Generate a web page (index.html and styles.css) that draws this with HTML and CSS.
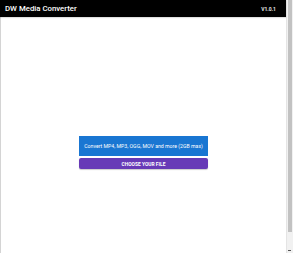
FILE: index.html
```html
<!DOCTYPE html>
<html>
<head>
<meta charset="utf-8">
<link rel="stylesheet" href="styles.css">
</head>
<body>
<div class="frame">
  <div class="page">
    <header class="topbar">
      <span class="title">DW Media Converter</span>
      <span class="version">V1.0.1</span>
    </header>
    <main class="content">
      <div class="uploader">
        <div class="info">Convert MP4, MP3, OGG, MOV and more (2GB max)</div>
        <button class="choose">CHOOSE YOUR FILE</button>
      </div>
    </main>
  </div>
  <div class="scrollbar">
    <div class="thumb"></div>
    <div class="arrow"></div>
  </div>
</div>
</body>
</html>
```
FILE: styles.css
```css
html, body {
  margin: 0;
  padding: 0;
  height: 100%;
  overflow: hidden;
  background: #ffffff;
  font-family: Roboto, "Liberation Sans", sans-serif;
}

.frame {
  display: flex;
  height: 253px;
}

.page {
  flex: 1;
  display: flex;
  flex-direction: column;
  min-width: 0;
}

.topbar {
  height: 17px;
  background: #000000;
  display: flex;
  align-items: center;
  justify-content: space-between;
  padding: 0 10px 0 5px;
  box-shadow: 0 1px 1px rgba(0, 0, 0, 0.12);
  position: relative;
  z-index: 1;
}

.title {
  color: #ffffff;
  font-weight: 500;
  font-size: 7.8px;
}

.version {
  color: #e6e6e6;
  font-weight: 700;
  font-size: 5px;
}

.content {
  flex: 1;
  border-left: 1px solid #d4d4d4;
  display: flex;
  justify-content: center;
  padding-top: 119px;
}

.uploader {
  width: 129px;
  display: flex;
  flex-direction: column;
  gap: 2px;
}

.info {
  height: 20px;
  background: #1976d2;
  color: #ffffff;
  font-size: 5.2px;
  display: flex;
  align-items: center;
  justify-content: center;
  white-space: nowrap;
}

.choose {
  height: 11px;
  margin: 0;
  padding: 0;
  border: none;
  border-radius: 2px;
  background: #673ab7;
  color: #ffffff;
  font-family: Roboto, "Liberation Sans", sans-serif;
  font-weight: 700;
  font-size: 4.9px;
  box-shadow: 0 1px 1px rgba(0, 0, 0, 0.2);
}

.scrollbar {
  width: 6px;
  background: #f1f1f1;
  border-left: 1px solid #e4e4e4;
  display: flex;
  flex-direction: column;
  position: relative;
}

.thumb {
  margin: 0 1px;
  height: 232px;
  background: #c2c2c2;
}

.arrow {
  position: absolute;
  bottom: 2px;
  left: 1px;
  width: 3px;
  height: 1px;
  background: #555555;
}
```
